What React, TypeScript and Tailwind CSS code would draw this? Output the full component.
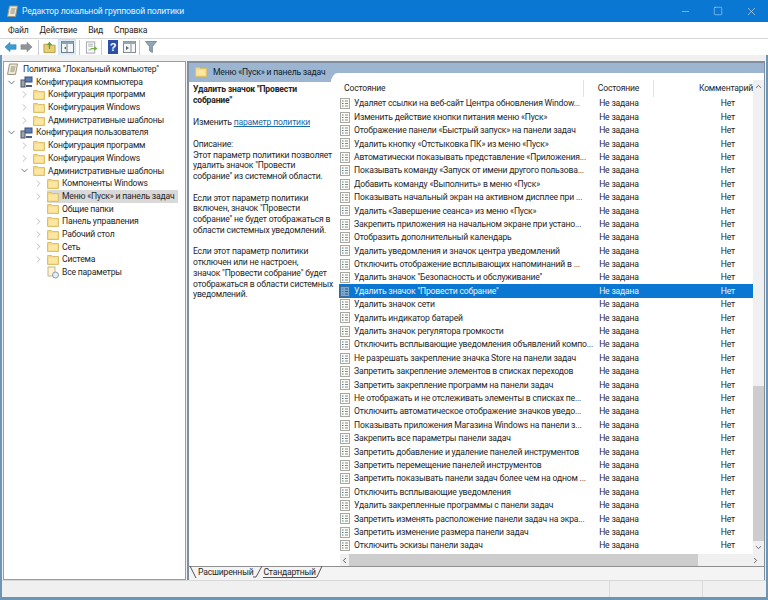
import { ChevronDown, ChevronRight, Minus, Square, X } from 'lucide-react';

const rows = [
    'Удаляет ссылки на веб-сайт Центра обновления Window...',
    'Изменить действие кнопки питания меню «Пуск»',
    'Отображение панели «Быстрый запуск» на панели задач',
    'Удалить кнопку «Отстыковка ПК» из меню «Пуск»',
    'Автоматически показывать представление «Приложения...',
    'Показывать команду «Запуск от имени другого пользова...',
    'Добавить команду «Выполнить» в меню «Пуск»',
    'Показывать начальный экран на активном дисплее при ...',
    'Удалить «Завершение сеанса» из меню «Пуск»',
    'Закрепить приложения на начальном экране при устано...',
    'Отобразить дополнительный календарь',
    'Удалить уведомления и значок центра уведомлений',
    'Отключить отображение всплывающих напоминаний в ...',
    'Удалить значок "Безопасность и обслуживание"',
    'Удалить значок "Провести собрание"',
    'Удалить значок сети',
    'Удалить индикатор батарей',
    'Удалить значок регулятора громкости',
    'Отключить всплывающие уведомления объявлений компо...',
    'Не разрешать закрепление значка Store на панели задач',
    'Запретить закрепление элементов в списках переходов',
    'Запретить закрепление программ на панели задач',
    'Не отображать и не отслеживать элементы в списках пе...',
    'Отключить автоматическое отображение значков уведо...',
    'Показывать приложения Магазина Windows на панели з...',
    'Закрепить все параметры панели задач',
    'Запретить добавление и удаление панелей инструментов',
    'Запретить перемещение панелей инструментов',
    'Запретить показывать панели задач более чем на одном ...',
    'Отключить всплывающие уведомления',
    'Удалить закрепленные программы с панели задач',
    'Запретить изменять расположение панели задач на экра...',
    'Запретить изменение размера панели задач',
    'Отключить эскизы панели задач',
];

const tree = [
    { label: 'Конфигурация компьютера', depth: 1, arrow: 'down', icon: 'pc' },
    { label: 'Конфигурация программ', depth: 2, arrow: 'right', icon: 'folder' },
    { label: 'Конфигурация Windows', depth: 2, arrow: 'right', icon: 'folder' },
    { label: 'Административные шаблоны', depth: 2, arrow: 'right', icon: 'folder' },
    { label: 'Конфигурация пользователя', depth: 1, arrow: 'down', icon: 'pc' },
    { label: 'Конфигурация программ', depth: 2, arrow: 'right', icon: 'folder' },
    { label: 'Конфигурация Windows', depth: 2, arrow: 'right', icon: 'folder' },
    { label: 'Административные шаблоны', depth: 2, arrow: 'down', icon: 'folder' },
    { label: 'Компоненты Windows', depth: 3, arrow: 'right', icon: 'folder' },
    { label: 'Меню «Пуск» и панель задач', depth: 3, arrow: 'right', icon: 'folder', active: true },
    { label: 'Общие папки', depth: 3, arrow: '', icon: 'folder' },
    { label: 'Панель управления', depth: 3, arrow: 'right', icon: 'folder' },
    { label: 'Рабочий стол', depth: 3, arrow: 'right', icon: 'folder' },
    { label: 'Сеть', depth: 3, arrow: 'right', icon: 'folder' },
    { label: 'Система', depth: 3, arrow: 'right', icon: 'folder' },
    { label: 'Все параметры', depth: 3, arrow: '', icon: 'all' },
];

const Folder = () => (
    <svg width="12" height="11" viewBox="0 0 12 11" className="shrink-0">
        <path d="M0.5 2.5V1.5H4.5L5.5 2.5H11.5V10.5H0.5Z" fill="#f3d57f" stroke="#dcc06a" />
        <rect x="1.5" y="3.5" width="9" height="6" fill="#fbe6a2" />
    </svg>
);

const Scroll = () => (
    <svg width="11" height="13" viewBox="0 0 11 13" className="shrink-0">
        <path d="M2.5 1H10.5L8.5 11.5H0.5Z" fill="#efe8d2" stroke="#9a9684" />
        <path d="M4 4H8.5M3.6 6H8M3.3 8H7.5" stroke="#8d8d80" />
    </svg>
);

const Computer = () => (
    <svg width="13" height="12" viewBox="0 0 13 12" className="shrink-0">
        <rect x="5" y="1" width="7" height="5" fill="#5b7fb5" stroke="#3a4f78" />
        <rect x="1" y="4" width="4" height="7" fill="#9aa3b2" stroke="#4f5663" />
        <path d="M6 10H12" stroke="#4f5f80" strokeWidth="2" />
    </svg>
);

const AllSettings = () => (
    <svg width="12" height="13" viewBox="0 0 12 13" className="shrink-0">
        <rect x="1" y="1" width="7" height="9" fill="#fbf3d5" stroke="#c6b988" />
        <circle cx="8.5" cy="9" r="3" fill="#e8edf2" stroke="#8b9bad" />
    </svg>
);

const SettingIcon = ({ selected }: { selected: boolean }) => (
    <svg width="10" height="11" viewBox="0 0 10 11" className="shrink-0">
        <rect x="0.5" y="0.5" width="9" height="10" fill={selected ? '#7fa9cf' : '#fbfaf4'} stroke={selected ? '#3a6f9f' : '#a8a8a0'} />
        <path d="M2 3H3.5M2 5.5H3.5M2 8H3.5" stroke="#4d7a96" />
        <path d="M5 3H8M5 5.5H8M5 8H8" stroke={selected ? '#245d8e' : '#8c8c84'} />
    </svg>
);

const ToolSep = () => <div className="mx-[3px] h-[15px] w-px shrink-0 bg-[#c8ccd0]" />;

const Toolbar = () => (
    <div className="flex h-[16px] items-center bg-white pl-[4px]">
        <svg width="13" height="12" viewBox="0 0 14 12">
            <path d="M1 6L6.5 1V3.5H13V8.5H6.5V11Z" fill="#3d9bd3" stroke="#2c7fb4" strokeWidth="0.6" />
        </svg>
        <svg width="13" height="12" viewBox="0 0 14 12" className="ml-[3px]">
            <path d="M13 6L7.5 1V3.5H1V8.5H7.5V11Z" fill="#8f9498" stroke="#7c8185" strokeWidth="0.6" />
        </svg>
        <div className="w-[2px]" />
        <ToolSep />
        <svg width="13" height="13" viewBox="0 0 14 13" className="ml-[1px]">
            <path d="M1 3H5L6 4H13V12H1Z" fill="#e8cf72" stroke="#b49b45" />
            <path d="M7 8V2M4.8 4L7 1.5L9.2 4" stroke="#5f9c3a" strokeWidth="1.4" fill="none" />
        </svg>
        <div className="ml-[2px] flex h-[17px] w-[18px] shrink-0 items-center justify-center border border-[#cfe4f5] bg-[#dcebf7]">
            <svg width="13" height="12" viewBox="0 0 13 12">
                <rect x="0.5" y="0.5" width="12" height="11" fill="#f4f6f7" stroke="#707c86" />
                <rect x="0.5" y="0.5" width="12" height="2.5" fill="#8fa2b2" />
                <path d="M6 3V11" stroke="#707c86" />
                <path d="M3 7L5 5.5V8.5Z" fill="#2f7d46" />
            </svg>
        </div>
        <ToolSep />
        <svg width="13" height="13" viewBox="0 0 14 13" className="ml-[2px]">
            <rect x="1.5" y="0.5" width="9" height="12" fill="#fafafa" stroke="#9da3a8" />
            <path d="M3.5 3H8.5M3.5 5H8.5M3.5 9H7" stroke="#a6abb0" />
            <path d="M6 7H10V5L13.5 7.5L10 10V8.5H6Z" fill="#74ad42" />
        </svg>
        <ToolSep />
        <div className="ml-[3px] flex h-[14px] w-[10px] items-center justify-center bg-[#2e4fa8] font-['Liberation_Sans',sans-serif] text-[11px] font-bold text-white">?</div>
        <div className="ml-[5px]">
            <svg width="13" height="12" viewBox="0 0 13 12">
                <rect x="0.5" y="0.5" width="12" height="11" fill="#f4f6f7" stroke="#858d94" />
                <rect x="0.5" y="0.5" width="12" height="2.5" fill="#9aa6b0" />
                <path d="M8 3V11" stroke="#858d94" />
                <path d="M3 5L6 7L3 9Z" fill="#5d6870" />
            </svg>
        </div>
        <ToolSep />
        <svg width="12" height="14" viewBox="0 0 13 14" className="ml-[2px]">
            <path d="M0.5 1H12.5L8 6.5V13L5 11V6.5Z" fill="#8fa7b8" stroke="#5f7585" strokeWidth="0.8" />
        </svg>
    </div>
);

const TreeItem = ({ item }: { item: (typeof tree)[number] }) => {
    const offset = item.depth === 1 ? 'ml-[2px]' : item.depth === 2 ? 'ml-[15px]' : 'ml-[29px]';
    return (
        <div className={`flex h-[12.7px] items-center ${offset}`}>
            <span className="flex w-[14px] shrink-0 items-center justify-start">
                {item.arrow === 'down' && <ChevronDown size={11} strokeWidth={1.6} className="text-[#444444]" />}
                {item.arrow === 'right' && <ChevronRight size={11} strokeWidth={1.4} className="text-[#9a9a9a]" />}
            </span>
            <div className={`flex h-[12.7px] items-center gap-[3px] pr-[3px] ${item.active ? 'bg-[#d9d9d9]' : ''}`}>
                {item.icon === 'folder' && <Folder />}
                {item.icon === 'pc' && <Computer />}
                {item.icon === 'all' && <AllSettings />}
                <span className="whitespace-nowrap">{item.label}</span>
            </div>
        </div>
    );
};

export default function App() {
    return (
        <div className="flex h-[600px] w-[768px] flex-col overflow-hidden bg-white font-['Roboto',sans-serif] text-[8.6px] leading-none tracking-[-0.18px] text-[#262626]">
            <div className="flex h-[22px] shrink-0 items-center bg-[#0a78d2] text-white">
                <div className="ml-[7px]">
                    <Scroll />
                </div>
                <span className="ml-[4px] text-[#e6f1fa]">Редактор локальной групповой политики</span>
                <div className="ml-auto flex items-center text-[#cfe4f5]">
                    <Minus size={11} strokeWidth={1.2} className="mr-[22px]" />
                    <Square size={10} strokeWidth={1.2} className="mr-[22px]" />
                    <X size={13} strokeWidth={1.2} className="mr-[10px]" />
                </div>
            </div>
            <div className="flex h-[16px] shrink-0 items-center gap-[11px] pl-[8px]">
                <span>Файл</span>
                <span>Действие</span>
                <span>Вид</span>
                <span>Справка</span>
            </div>
            <div className="border-t border-[#d6d6d6]">
                <Toolbar />
            </div>
            <div className="flex min-h-0 flex-1 flex-col border-x-2 border-b-[3px] border-[#6d95b5] bg-[#f0f0f0]">
                <div className="flex min-h-0 flex-1 gap-[1px] pl-[1px] pr-[1px] pt-[6px]">
                    <div className="w-[183px] shrink-0 border border-[#8f9fae] bg-white pt-[1px]">
                        <div className="flex h-[12.7px] items-center gap-[5px] pl-[3px]">
                            <Scroll />
                            <span>Политика "Локальный компьютер"</span>
                        </div>
                        {tree.map((item, i) => (
                            <TreeItem key={i} item={item} />
                        ))}
                    </div>
                    <div className="flex min-w-0 flex-1 flex-col border-l-2 border-r border-t-2 border-[#7f8f9f] bg-white">
                        <div className="flex min-h-0 flex-1">
                            <div className="flex w-[142px] shrink-0 flex-col">
                                <div className="flex h-[19px] items-start gap-[6px] bg-[#9cb6d1] pl-[6px] pt-[3px] text-[#10202e]">
                                    <Folder />
                                    <span className="whitespace-nowrap pt-[2px]">Меню «Пуск» и панель задач</span>
                                </div>
                                <div className="whitespace-nowrap pl-[4px] pt-[2px] leading-[10.7px]">
                                    <p className="font-bold">
                                        Удалить значок "Провести
                                        <br />
                                        собрание"
                                    </p>
                                    <p className="mt-[12px]">
                                        Изменить <span className="text-[#1a6aa8] underline">параметр политики</span>
                                    </p>
                                    <p className="mt-[10.7px]">Описание:</p>
                                    <p>
                                        Этот параметр политики позволяет
                                        <br />
                                        удалить значок "Провести
                                        <br />
                                        собрание" из системной области.
                                    </p>
                                    <p className="mt-[11px]">
                                        Если этот параметр политики
                                        <br />
                                        включен, значок "Провести
                                        <br />
                                        собрание" не будет отображаться в
                                        <br />
                                        области системных уведомлений.
                                    </p>
                                    <p className="mt-[11px]">
                                        Если этот параметр политики
                                        <br />
                                        отключен или не настроен,
                                        <br />
                                        значок "Провести собрание" будет
                                        <br />
                                        отображаться в области системных
                                        <br />
                                        уведомлений.
                                    </p>
                                </div>
                            </div>
                            <div className="flex min-w-0 flex-1 flex-col">
                                <div className="flex h-[10px] shrink-0">
                                    <svg width="8" height="19" viewBox="0 0 8 19" className="-ml-[1px] shrink-0 overflow-visible">
                                        <path d="M0 0H8V10C4 10 3 13 0 19Z" fill="#9cb6d1" />
                                    </svg>
                                    <div className="flex-1 bg-[#9cb6d1]" />
                                </div>
                                <div className="flex min-h-0 flex-1 pt-[7px]">
                                    <div className="flex min-w-0 flex-1 flex-col">
                                        <div className="flex h-[17px] shrink-0 items-center">
                                            <div className="w-[252px] pl-[13px]">Состояние</div>
                                            <div className="flex h-full w-[70px] items-center justify-center border-l border-[#e2e2e2]">Состояние</div>
                                            <div className="flex h-full min-w-0 flex-1 items-center justify-end overflow-hidden whitespace-nowrap border-l border-[#e2e2e2]">Комментарий</div>
                                        </div>
                                        <div>
                                            {rows.map((label, i) => {
                                                const selected = i === 14;
                                                return (
                                                    <div key={i} className={`ml-[8px] flex h-[13.4px] items-center ${selected ? 'bg-[#0a78d2] text-[#e8f2fa]' : ''}`}>
                                                        <div className="flex w-[245px] shrink-0 items-center gap-[4px] whitespace-nowrap pl-[1px]">
                                                            <SettingIcon selected={selected} />
                                                            <span>{label}</span>
                                                        </div>
                                                        <div className="w-[70px] text-center">Не задана</div>
                                                        <div className="flex-1 pr-[18px] text-right">Нет</div>
                                                    </div>
                                                );
                                            })}
                                        </div>
                                    </div>
                                    <div className="flex w-[11px] shrink-0 flex-col bg-[#f0f0f0] text-[#555555]">
                                        <div className="flex h-[13px] items-center justify-center">
                                            <ChevronDown size={9} strokeWidth={2.2} className="rotate-180" />
                                        </div>
                                        <div className="h-[293px]" />
                                        <div className="min-h-0 flex-1 bg-[#cdcdcd]" />
                                        <div className="flex h-[13px] items-center justify-center">
                                            <ChevronDown size={9} strokeWidth={2.2} />
                                        </div>
                                    </div>
                                </div>
                                <div className="ml-[9px] flex h-[12px] shrink-0 items-center bg-[#f0f0f0] text-[#444444]">
                                    <div className="flex w-[9px] justify-center">
                                        <ChevronRight size={9} strokeWidth={2.2} className="rotate-180" />
                                    </div>
                                    <div className="h-full w-[349px] bg-[#cdcdcd]" />
                                    <div className="flex-1" />
                                    <div className="mr-[2px] flex w-[14px] justify-center">
                                        <ChevronRight size={9} strokeWidth={2.2} />
                                    </div>
                                </div>
                            </div>
                        </div>
                        <div className="flex h-[14px] shrink-0 items-start border-t border-[#8f8f8f] bg-[#f4f4f4]">
                            <svg width="9" height="12" viewBox="0 0 9 12" className="-mt-[1px] shrink-0">
                                <path d="M1 0L7 12" stroke="#555555" fill="none" />
                            </svg>
                            <div className="flex h-[11px] items-center whitespace-nowrap">Расширенный</div>
                            <svg width="10" height="12" viewBox="0 0 10 12" className="-mt-[1px] shrink-0">
                                <path d="M0 11H3L9 0" stroke="#555555" fill="none" />
                            </svg>
                            <div className="flex h-[11px] items-center whitespace-nowrap border-b border-[#555555]">Стандартный</div>
                            <svg width="8" height="12" viewBox="0 0 8 12" className="-mt-[1px] shrink-0">
                                <path d="M0 11H1L6 0" stroke="#555555" fill="none" />
                            </svg>
                        </div>
                    </div>
                </div>
                <div className="flex h-[17px] shrink-0 border-t border-[#d8d8d8]">
                    <div className="w-[607px]" />
                    <div className="w-[93px] border-l border-[#dcdcdc]" />
                    <div className="flex-1 border-l border-[#dcdcdc]" />
                </div>
            </div>
        </div>
    );
}
